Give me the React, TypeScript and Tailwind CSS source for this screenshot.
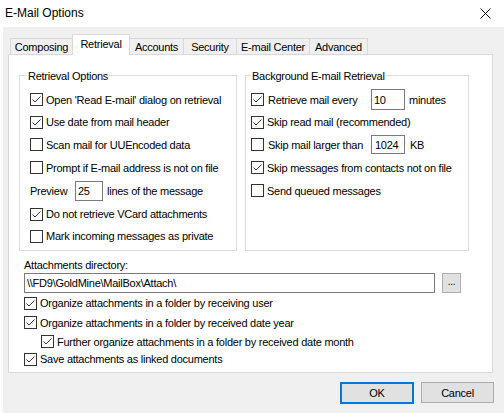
import React from "react";

function Box({ checked }: { checked?: boolean }) {
  return (
    <span className="w-[13px] h-[13px] border border-[#333333] bg-white flex items-center justify-center shrink-0">
      {checked && (
        <svg width="11" height="11" viewBox="0 0 11 11">
          <path d="M1.5 5.5 L4 8 L9.5 2.5" fill="none" stroke="#333333" strokeWidth="1" />
        </svg>
      )}
    </span>
  );
}

function Check({
  checked,
  label,
  h,
  children,
}: {
  checked?: boolean;
  label?: string;
  h: string;
  children?: React.ReactNode;
}) {
  return (
    <div className={`flex items-center ${h}`}>
      <Box checked={checked} />
      {label && <span className="ml-[3px] whitespace-nowrap">{label}</span>}
      {children}
    </div>
  );
}

function Tab({ label, w, selected, first }: { label: string; w: string; selected?: boolean; first?: boolean }) {
  if (selected) {
    return (
      <div
        className={`${w} h-[21px] -mb-px -ml-px relative z-10 bg-white border border-b-0 border-[#d9d9d9] flex items-center justify-center pb-[2px]`}
      >
        {label}
      </div>
    );
  }
  return (
    <div
      className={`${w} h-[16px] ${first ? "" : "-ml-px"} bg-[#f0f0f0] border border-b-0 border-[#d9d9d9] flex items-center justify-center`}
    >
      {label}
    </div>
  );
}

export default function App() {
  return (
    <div className="w-[504px] h-[413px] bg-[#f0f0f0] border-l-[3px] border-white font-['Liberation_Sans',Arial,sans-serif] text-[11px] tracking-[-0.25px] leading-[14px] text-black overflow-hidden">
      {/* Title bar */}
      <div className="h-[27px] bg-white flex items-center justify-between pl-[2px] pr-[13px]">
        <span className="text-[12px] tracking-normal leading-[16px] -mt-px">E-Mail Options</span>
        <svg width="11" height="11" viewBox="0 0 11 11" className="-mt-[1px]">
          <path d="M0.5 0.5 L10.5 10.5 M10.5 0.5 L0.5 10.5" stroke="#000" strokeWidth="1" fill="none" />
        </svg>
      </div>

      {/* Tabs */}
      <div className="mt-[7px] ml-[7px] h-[20px] flex items-end">
        <Tab label="Composing" w="w-[63px]" first />
        <Tab label="Retrieval" w="w-[58px]" selected />
        <Tab label="Accounts" w="w-[55px]" />
        <Tab label="Security" w="w-[54px]" />
        <Tab label="E-mail Center" w="w-[74px]" />
        <Tab label="Advanced" w="w-[59px]" />
      </div>

      {/* Panel */}
      <div className="ml-[5px] w-[485px] h-[319px] bg-white border border-[#d9d9d9] relative">
        <div className="flex gap-[8px] pl-[10px] pt-[20px]">
          {/* Retrieval Options */}
          <div className="relative w-[218px] h-[176px] border border-[#dcdcdc] pl-[10px] pt-[12px]">
            <span className="absolute left-[7px] -top-[7px] bg-white px-[1px] whitespace-nowrap">Retrieval Options</span>
            <Check checked label="Open 'Read E-mail' dialog on retrieval" h="h-[23px]" />
            <Check checked label="Use date from mail header" h="h-[22px]" />
            <Check label="Scan mail for UUEncoded data" h="h-[23px]" />
            <Check label="Prompt if E-mail address is not on file" h="h-[23px]" />
            <div className="flex items-center h-[23px]">
              <span className="w-[45px]">Preview</span>
              <span className="w-[28px] h-[20px] border border-[#7a7a7a] bg-white flex items-center pl-[2px]">25</span>
              <span className="ml-[4px] whitespace-nowrap">lines of the message</span>
            </div>
            <Check checked label="Do not retrieve VCard attachments" h="h-[24px]" />
            <Check label="Mark incoming messages as private" h="h-[20px]" />
          </div>

          {/* Background E-mail Retrieval */}
          <div className="relative w-[224px] h-[176px] border border-[#dcdcdc] pl-[5px] pt-[12px]">
            <span className="absolute left-[5px] -top-[7px] bg-white px-[1px] whitespace-nowrap">
              Background E-mail Retrieval
            </span>
            <Check checked h="h-[23px]">
              <span className="ml-[4px] w-[103px] whitespace-nowrap">Retrieve mail every</span>
              <span className="w-[34px] h-[21px] border border-[#7a7a7a] bg-white flex items-center pl-[2px]">10</span>
              <span className="ml-[4px]">minutes</span>
            </Check>
            <Check checked label="Skip read mail (recommended)" h="h-[22px]" />
            <Check h="h-[23px]">
              <span className="ml-[4px] w-[103px] whitespace-nowrap">Skip mail larger than</span>
              <span className="w-[34px] h-[19px] border border-[#7a7a7a] bg-white flex items-center pl-[3px]">1024</span>
              <span className="ml-[5px]">KB</span>
            </Check>
            <Check checked label="Skip messages from contacts not on file" h="h-[23px]" />
            <Check label="Send queued messages" h="h-[23px]" />
          </div>
        </div>

        {/* Attachments */}
        <div className="pl-[15px]">
          <div className="mt-[7px] h-[14px]">Attachments directory:</div>
          <div className="mt-[1px] flex items-center">
            <span className="w-[411px] h-[20px] border border-[#7a7a7a] bg-white flex items-center pl-[2px]">
              \\FD9\GoldMine\MailBox\Attach\
            </span>
            <span className="ml-[7px] w-[19px] h-[20px] border border-[#adadad] bg-[#e1e1e1] flex items-center justify-center text-[10px] pb-[2px]">
              ...
            </span>
          </div>
          <Check checked label="Organize attachments in a folder by receiving user" h="h-[20px]" />
          <Check checked label="Organize attachments in a folder by received date year" h="h-[19px]" />
          <div className="pl-[17px]">
            <Check checked label="Further organize attachments in a folder by received date month" h="h-[19px]" />
          </div>
          <Check checked label="Save attachments as linked documents" h="h-[16px]" />
        </div>
      </div>

      {/* Buttons */}
      <div className="mt-[9px] flex justify-end gap-[7px] pr-[10px]">
        <button className="w-[74px] h-[22px] border-2 border-[#0078d7] bg-[#e1e1e1] flex items-center justify-center">
          OK
        </button>
        <button className="w-[73px] h-[21px] border border-[#adadad] bg-[#e1e1e1] flex items-center justify-center">
          Cancel
        </button>
      </div>
    </div>
  );
}
